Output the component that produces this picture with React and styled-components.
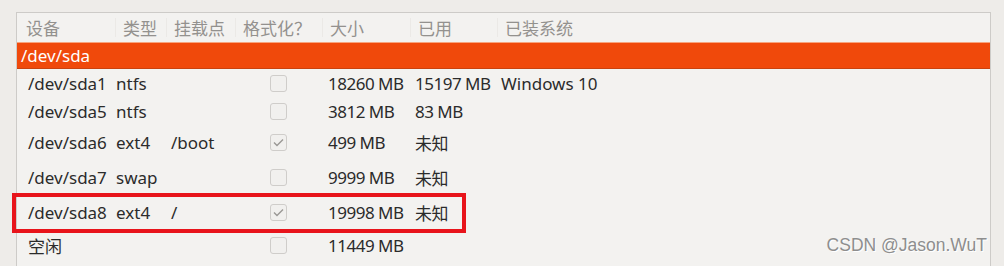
import React from "react";
import styled, { createGlobalStyle } from "styled-components";

const GlobalStyle = createGlobalStyle`
  html, body {
    margin: 0;
    padding: 0;
    background: #eeece9;
    font-family: "Noto Sans", "Noto Sans CJK SC", sans-serif;
  }
`;

const Page = styled.div`
  position: relative;
  width: 1004px;
  height: 266px;
  overflow: hidden;
  padding: 12px 0 0 16px;
  box-sizing: border-box;
`;

const Frame = styled.div`
  width: 975px;
  height: 260px;
  box-sizing: border-box;
  border: 1px solid #cdcbc8;
  border-bottom: none;
  background: #f3f2f0;
`;

const HeaderRow = styled.div`
  display: grid;
  grid-template-columns: 97px 51px 69px 87px 88px 87px 1fr;
  height: 29px;
  align-items: center;
  padding-left: 9px;
  font-family: "Noto Sans CJK SC", "Noto Sans", sans-serif;
  font-size: 17px;
  color: #93918e;
`;

const HeaderCell = styled.div`
  position: relative;
  height: 100%;
  display: flex;
  align-items: center;
  ${(p) =>
    p.$sep &&
    `&::before {
      content: "";
      position: absolute;
      left: -8px;
      top: 5px;
      bottom: 5px;
      width: 1px;
      background: #ebe9e6;
    }`}
`;

const Wide = styled.span`
  display: inline-block;
  width: 17px;
  text-align: center;
`;

const DiskRow = styled.div`
  height: 27px;
  box-sizing: border-box;
  background: #f0490b;
  border-top: 1px solid #f7a47e;
  border-bottom: 1px solid #c9420f;
  color: #fff;
  font-size: 17px;
  display: flex;
  align-items: center;
  padding-left: 4px;
`;

const PartRow = styled.div`
  position: relative;
  display: grid;
  grid-template-columns: 88px 55px 72px 85px 87px 86px 1fr;
  height: ${(p) => p.$h}px;
  align-items: center;
  padding-left: 11px;
  font-size: 17px;
  color: #2b2b2b;
`;

const Cell = styled.div`
  white-space: nowrap;
  ${(p) => p.$tight && "letter-spacing: -0.5px;"}
`;

const CheckCell = styled.div`
  padding-left: 27px;
  display: flex;
  align-items: center;
`;

const Check = styled.div`
  width: 17px;
  height: 17px;
  box-sizing: border-box;
  border: 1px solid #cfcdca;
  border-radius: 3px;
  background: #f1f0ee;
  display: flex;
  align-items: center;
  justify-content: center;
`;

const Highlight = styled.div`
  position: absolute;
  left: -5px;
  top: -2px;
  width: 454px;
  height: 40px;
  box-sizing: border-box;
  border: 4px solid #e8141b;
  pointer-events: none;
`;

const Watermark = styled.div`
  position: absolute;
  right: 17px;
  top: 235px;
  font-family: "Liberation Sans", Arial, sans-serif;
  font-size: 17.5px;
  color: #8e8e8e;
  text-shadow: 1px 1px 0 #ffffff;
`;

const Tick = () => (
  <svg width="11" height="9" viewBox="0 0 11 9">
    <path d="M1 4.5 L4 7.5 L10 1.5" fill="none" stroke="#9a9896" strokeWidth="1.4" />
  </svg>
);

const parts = [
  { dev: "/dev/sda1", type: "ntfs", mount: "", fmt: false, size: "18260 MB", used: "15197 MB", os: "Windows 10", h: 28 },
  { dev: "/dev/sda5", type: "ntfs", mount: "", fmt: false, size: "3812 MB", used: "83 MB", os: "", h: 28 },
  { dev: "/dev/sda6", type: "ext4", mount: "/boot", fmt: true, size: "499 MB", used: "未知", os: "", h: 34 },
  { dev: "/dev/sda7", type: "swap", mount: "", fmt: false, size: "9999 MB", used: "未知", os: "", h: 36 },
  { dev: "/dev/sda8", type: "ext4", mount: "/", fmt: true, size: "19998 MB", used: "未知", os: "", h: 34, mark: true },
  { dev: "空闲", type: "", mount: "", fmt: false, size: "11449 MB", used: "", os: "", h: 32 },
];

const headers = [
  "设备",
  "类型",
  "挂载点",
  <>
    格式化<Wide>？</Wide>
  </>,
  "大小",
  "已用",
  "已装系统",
];

export default function App() {
  return (
    <>
      <GlobalStyle />
      <Page>
        <Frame>
          <HeaderRow>
            {headers.map((h, i) => (
              <HeaderCell key={i} $sep={i > 0}>
                {h}
              </HeaderCell>
            ))}
          </HeaderRow>
          <DiskRow>/dev/sda</DiskRow>
          {parts.map((p) => (
            <PartRow key={p.dev} $h={p.h}>
              <Cell>{p.dev}</Cell>
              <Cell>{p.type}</Cell>
              <Cell>{p.mount}</Cell>
              <CheckCell>
                <Check>{p.fmt && <Tick />}</Check>
              </CheckCell>
              <Cell $tight>{p.size}</Cell>
              <Cell $tight>{p.used}</Cell>
              <Cell>{p.os}</Cell>
              {p.mark && <Highlight />}
            </PartRow>
          ))}
        </Frame>
        <Watermark>CSDN @Jason.WuT</Watermark>
      </Page>
    </>
  );
}
